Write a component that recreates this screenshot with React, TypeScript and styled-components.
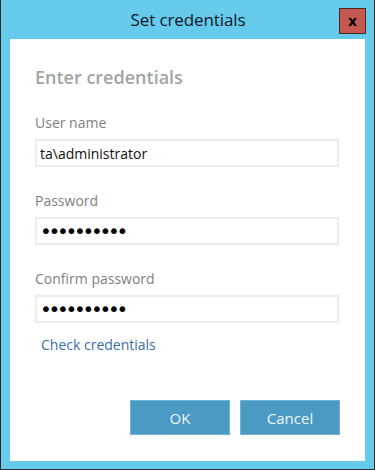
import React from "react";
import styled, { createGlobalStyle } from "styled-components";

const Global = createGlobalStyle`
  html, body { margin: 0; padding: 0; background: #ffffff; }
  body { font-family: "Open Sans", "Noto Sans", sans-serif; }
  * { box-sizing: border-box; }
`;

const Window = styled.div`
  width: 375px;
  height: 470px;
  background: #66caea;
  border: 1px solid #2b2b2b;
  border-top: none;
  display: flex;
  flex-direction: column;
`;

const TitleBar = styled.div`
  height: 39px;
  display: grid;
  grid-template-columns: 1fr auto 1fr;
  align-items: start;
  padding: 0 8px 0 9px;
`;

const Title = styled.div`
  grid-column: 2;
  font-size: 17px;
  line-height: 20px;
  margin-top: 10px;
  color: #15182a;
  letter-spacing: -0.1px;
`;

const CloseButton = styled.button`
  grid-column: 3;
  justify-self: end;
  margin-top: 8px;
  width: 27px;
  height: 26px;
  padding: 0;
  background: #c4574f;
  border: 1px solid #4a2622;
  color: #000;
  font-family: "DejaVu Sans", sans-serif;
  font-weight: bold;
  font-size: 14px;
  line-height: 22px;
  text-align: center;
`;

const Panel = styled.div`
  flex: 1;
  margin: 0 9px 8px 9px;
  background: #ffffff;
  padding: 25px 25px 0 25px;
  display: flex;
  flex-direction: column;
`;

const Heading = styled.h1`
  margin: 0;
  font-size: 18px;
  line-height: 26px;
  font-weight: 600;
  color: #a3a3a3;
`;

const Field = styled.div<{ $top: number }>`
  display: flex;
  flex-direction: column;
  margin-top: ${(p) => p.$top}px;
`;

const Label = styled.label`
  font-size: 14px;
  line-height: 20px;
  color: #7f7f7f;
  margin-bottom: 6px;
`;

const Input = styled.input`
  width: 304px;
  height: 28px;
  border: 2px solid #ececec;
  padding: 0 3px;
  font-family: "Open Sans", "Noto Sans", sans-serif;
  font-size: 14px;
  color: #111;
  outline: none;
  background: #fff;
  &[type="password"] {
    font-family: "DejaVu Sans", sans-serif;
    font-size: 20px;
    letter-spacing: -3.3px;
    color: #000;
  }
`;

const Link = styled.a`
  margin-top: 12px;
  margin-left: 6px;
  font-size: 14px;
  line-height: 20px;
  color: #3b6ea6;
  text-decoration: none;
`;

const Buttons = styled.div`
  margin-top: 45px;
  display: flex;
  justify-content: flex-end;
  gap: 10px;
  width: 305px;
`;

const Button = styled.button`
  width: 100px;
  height: 35px;
  background: #4a9ac4;
  border: 1px solid #6fb4d8;
  color: #eef7fb;
  font-family: "Open Sans", "Noto Sans", sans-serif;
  font-size: 15px;
  padding: 0;
`;

export default function App() {
  return (
    <>
      <Global />
      <Window>
        <TitleBar>
          <Title>Set credentials</Title>
          <CloseButton>x</CloseButton>
        </TitleBar>
        <Panel>
          <Heading>Enter credentials</Heading>
          <Field $top={23}>
            <Label>User name</Label>
            <Input type="text" defaultValue="ta\administrator" />
          </Field>
          <Field $top={24}>
            <Label>Password</Label>
            <Input type="password" defaultValue="passwordxx" />
          </Field>
          <Field $top={24}>
            <Label>Confirm password</Label>
            <Input type="password" defaultValue="passwordxx" />
          </Field>
          <Link href="#">Check credentials</Link>
          <Buttons>
            <Button>OK</Button>
            <Button>Cancel</Button>
          </Buttons>
        </Panel>
      </Window>
    </>
  );
}
